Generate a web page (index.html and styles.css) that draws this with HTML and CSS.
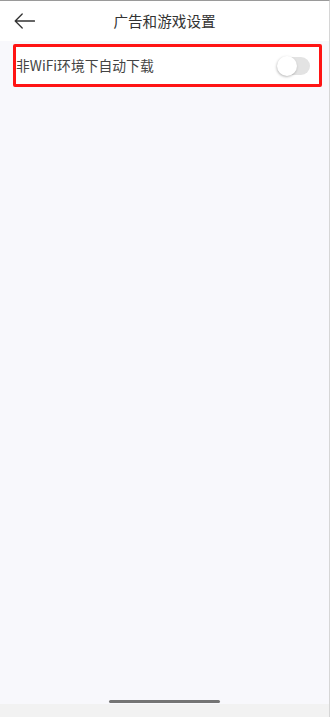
FILE: index.html
```html
<!DOCTYPE html>
<html lang="zh-CN">
<head>
<meta charset="utf-8">
<title>广告和游戏设置</title>
<link rel="stylesheet" href="styles.css">
</head>
<body>
<div class="app">
  <header class="header">
    <div class="back">
      <svg width="21" height="16" viewBox="0 0 21 16" fill="none">
        <path d="M1.2 8H20.5 M8.2 1L1.2 8L8.2 15" stroke="#333" stroke-width="1.3" stroke-linecap="round" stroke-linejoin="round"/>
      </svg>
    </div>
    <h1 class="title">广告和游戏设置</h1>
    <div></div>
  </header>
  <main class="main">
    <div class="row">
      <span class="label">非WiFi环境下自动下载</span>
      <span class="switch"><span class="knob"></span></span>
    </div>
    <div class="spacer"></div>
    <div class="home-indicator"></div>
  </main>
  <footer class="bottom"></footer>
</div>
</body>
</html>
```
FILE: styles.css
```css
* { box-sizing: border-box; }
html, body { margin: 0; padding: 0; }
body {
  background: #fff;
  font-family: "Noto Sans CJK SC", "Noto Sans", sans-serif;
  width: 331px;
  height: 717px;
  overflow: hidden;
}
.app {
  width: 330px;
  height: 717px;
  display: flex;
  flex-direction: column;
  border-top: 1px solid #9a9a9a;
  border-right: 1px solid #d6d6d6;
}
.header {
  height: 40px;
  flex: none;
  background: #fff;
  display: grid;
  grid-template-columns: 1fr auto 1fr;
  align-items: center;
}
.back {
  padding-left: 14px;
  display: flex;
  align-items: center;
  height: 100%;
}
.back svg { display: block; }
.title {
  margin: 0;
  font-size: 14.6px;
  font-weight: 400;
  color: #333;
  line-height: 1;
}
.main {
  flex: 1;
  background: #f8f8fc;
  display: flex;
  flex-direction: column;
  align-items: center;
  padding-top: 3px;
  padding-bottom: 1px;
}
.row {
  align-self: stretch;
  margin: 0 7px 0 13px;
  height: 43px;
  border: 3px solid #ff1414;
  border-radius: 2px;
  background: #fff;
  display: flex;
  align-items: center;
  justify-content: space-between;
  padding: 0 9px 0 0;
}
.label {
  font-size: 13.8px;
  color: #444;
  line-height: 1;
}
.switch {
  position: relative;
  width: 32px;
  height: 18px;
  border-radius: 9px;
  background: #e3e3e3;
  display: flex;
  align-items: center;
}
.knob {
  width: 20px;
  height: 20px;
  border-radius: 50%;
  background: #fff;
  margin-left: -1px;
  box-shadow: -0.5px 1px 2.5px rgba(0, 0, 0, 0.28);
}
.spacer { flex: 1; }
.home-indicator {
  width: 111px;
  height: 3px;
  border-radius: 2px;
  background: #747474;
}
.bottom {
  height: 13px;
  flex: none;
  background: #f2f2f2;
}
```
